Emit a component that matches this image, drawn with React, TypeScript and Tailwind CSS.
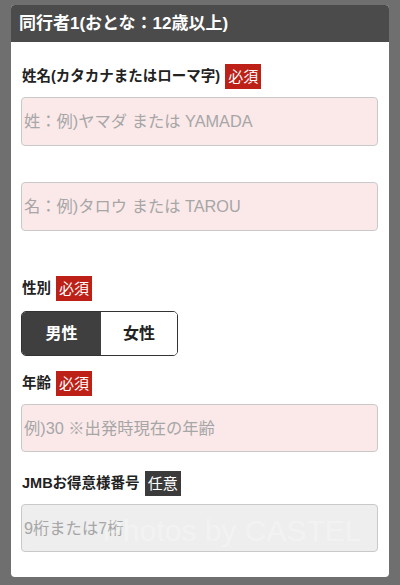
import type { ReactNode } from 'react'

const jp = "font-['Liberation_Sans','Noto_Sans_CJK_JP',sans-serif]"

function Badge({ children, tone = 'red' }: { children: ReactNode; tone?: 'red' | 'dark' }) {
  const bg = tone === 'red' ? 'bg-[#bd2016]' : 'bg-[#3b3b3b]'
  return (
    <span className={`${bg} ml-[5px] flex h-[25px] items-center px-[3px] text-[15px] leading-none text-white`}>
      {children}
    </span>
  )
}

function Label({ text, badge, tone }: { text: string; badge: string; tone?: 'red' | 'dark' }) {
  return (
    <div className="flex h-[25px] items-center">
      <span className="pl-px text-[14.5px] font-bold leading-none text-[#222]">{text}</span>
      <Badge tone={tone}>{badge}</Badge>
    </div>
  )
}

function Field({ placeholder, gray = false, h = 'h-[49px]' }: { placeholder: string; gray?: boolean; h?: string }) {
  const bg = gray ? 'bg-[#eeeeee]' : 'bg-[#fbe9ea]'
  return (
    <div className={`${bg} ${h} flex items-center rounded-[4px] border border-[#c9c9c9] pl-[2px] text-[16.3px] text-[#a6a6a6]`}>
      {placeholder}
    </div>
  )
}

export default function App() {
  return (
    <div className={`${jp} min-h-[585px] w-[400px] bg-[#6f6f6f] pt-[5px] pb-[8px]`}>
      <div className="mx-[11px] overflow-hidden rounded-[4px] bg-white">
        <div className="flex h-[37px] items-center bg-[#4b4b4b] pl-[8px] text-[17px] font-bold text-white">
          同行者1(おとな：12歳以上)
        </div>

        <div className="flex flex-col pr-[11px] pl-[10px] pt-[22px] pb-[25px]">
          <Label text="姓名(カタカナまたはローマ字)" badge="必須" />
          <div className="mt-[8px]">
            <Field placeholder="姓：例)ヤマダ または YAMADA" />
          </div>
          <div className="mt-[36px]">
            <Field placeholder="名：例)タロウ または TAROU" />
          </div>

          <div className="mt-[45px]">
            <Label text="性別" badge="必須" />
          </div>
          <div className="mt-[10px] flex h-[45px] w-[157px] overflow-hidden rounded-[5px] border border-[#333] text-[16px] font-bold">
            <div className="flex w-[79px] items-center justify-center bg-[#3f3f3f] text-white">男性</div>
            <div className="flex flex-1 items-center justify-center bg-white text-[#222]">女性</div>
          </div>

          <div className="mt-[15px]">
            <Label text="年齢" badge="必須" />
          </div>
          <div className="mt-[8px]">
            <Field placeholder="例)30 ※出発時現在の年齢" h="h-[48px]" />
          </div>

          <div className="mt-[19px]">
            <Label text="JMBお得意様番号" badge="任意" tone="dark" />
          </div>
          <div className="relative mt-[8px]">
            <Field placeholder="9桁または7桁" gray h="h-[48px]" />
            <span className="pointer-events-none absolute left-[82px] top-[12px] whitespace-nowrap text-[30px] font-light leading-none text-white/30">
              Photos by CASTEL
            </span>
          </div>
        </div>
      </div>
    </div>
  )
}
